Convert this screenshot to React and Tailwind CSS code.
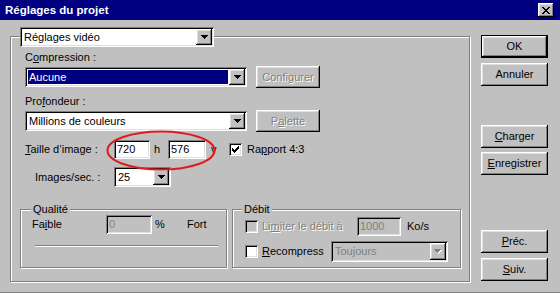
import React from 'react';

const RAISED = 'bg-[#c0c0c0] shadow-[inset_-1px_-1px_#000,inset_1px_1px_#fff,inset_-2px_-2px_#808080,inset_2px_2px_#dfdfdf]';
const SUNKEN = 'shadow-[inset_1px_1px_#808080,inset_-1px_-1px_#fff,inset_2px_2px_#000,inset_-2px_-2px_#dfdfdf]';
const ETCHED = 'border border-[#808080] shadow-[inset_1px_1px_#fff,1px_1px_#fff]';
const DISABLED_TXT = 'text-[#808080] [text-shadow:1px_1px_#fff]';

const ARROW = ['xxxxxxx', '.xxxxx.', '..xxx..', '...x...'];
const CLOSE = ['xx....xx', '.xx..xx.', '..xxxx..', '...xx...', '..xxxx..', '.xx..xx.', 'xx....xx'];
const CHECK = ['......x', '.....xx', 'x...xxx', 'xx.xxx.', 'xxxxx..', '.xxx...', '..x....'];

// petits glyphes pixel par pixel (flèches, croix, coche)
function Pixels({ rows, color = '#000', shade }) {
  const w = rows[0].length + (shade ? 1 : 0);
  const h = rows.length + (shade ? 1 : 0);
  const cells = [];
  rows.forEach((r, y) =>
    r.split('').forEach((c, x) => {
      if (c === 'x') cells.push([x, y]);
    })
  );
  return (
    <svg width={w} height={h} viewBox={`0 0 ${w} ${h}`} shapeRendering="crispEdges">
      {shade && cells.map(([x, y]) => <rect key={`s${x}-${y}`} x={x + 1} y={y + 1} width="1" height="1" fill={shade} />)}
      {cells.map(([x, y]) => <rect key={`${x}-${y}`} x={x} y={y} width="1" height="1" fill={color} />)}
    </svg>
  );
}

function Button({ children, isDefault, disabled, className = '' }) {
  return (
    <div
      className={`flex items-center justify-center ${RAISED} ${isDefault ? 'border border-black' : ''} ${
        disabled ? DISABLED_TXT : ''
      } ${className}`}
    >
      <span>{children}</span>
    </div>
  );
}

function Select({ value, selected, disabled, className = '' }) {
  return (
    <div className={`flex p-[2px] ${disabled ? 'bg-[#c0c0c0]' : 'bg-white'} ${SUNKEN} ${className}`}>
      <div className="flex-1 min-w-0 p-[1px] pr-[1px]">
        <div
          className={`h-full flex items-center pl-[1px] whitespace-nowrap ${selected ? 'bg-[#000080] text-white' : ''} ${
            disabled ? 'text-[#808080]' : ''
          }`}
        >
          {value}
        </div>
      </div>
      <div className={`w-[16px] h-full flex items-center justify-center ${RAISED}`}>
        {disabled ? <Pixels rows={ARROW} color="#808080" shade="#fff" /> : <Pixels rows={ARROW} />}
      </div>
    </div>
  );
}

function Input({ value, disabled, className = '' }) {
  return (
    <div
      className={`h-[19px] flex items-center pl-[3px] ${SUNKEN} ${disabled ? 'bg-[#c0c0c0] text-[#808080]' : 'bg-white'} ${className}`}
    >
      {value}
    </div>
  );
}

function Checkbox({ checked, disabled }) {
  return (
    <div className={`w-[13px] h-[13px] shrink-0 flex items-center justify-center ${SUNKEN} ${disabled ? 'bg-[#c0c0c0]' : 'bg-white'}`}>
      {checked && <Pixels rows={CHECK} />}
    </div>
  );
}

export default function App() {
  return (
    <div className="relative w-[560px] h-[293px] overflow-hidden bg-[#c0c0c0] text-black text-[11px] leading-[13px] flex flex-col font-['Liberation_Sans',Arial,sans-serif]">
      {/* barre de titre */}
      <div className="h-[20px] shrink-0 bg-[#000080] flex items-center pl-[5px] pr-[6px]">
        <span className="font-bold text-white text-[11.5px]">Réglages du projet</span>
        <div className={`ml-auto w-[16px] h-[14px] flex items-center justify-center ${RAISED}`}>
          <Pixels rows={CLOSE} />
        </div>
      </div>

      <div className="flex flex-1">
        {/* cadre principal */}
        <div className={`relative ml-[10px] mt-[16px] w-[460px] h-[246px] ${ETCHED}`}>
          <div className="absolute left-[9px] top-[-10px] w-[194px]">
            <Select value="Réglages vidéo" className="h-[20px]" />
          </div>

          <div className="ml-[14px] mt-[14px] h-[13px]">
            C<u>o</u>mpression :
          </div>
          <div className="ml-[14px] mt-[2px] h-[22px] flex items-center">
            <Select selected value="Aucune" className="w-[222px] h-[20px]" />
            <Button disabled className="ml-[9px] w-[64px] h-[22px]">
              Confi<u>g</u>urer
            </Button>
          </div>

          <div className="ml-[14px] mt-[7px] h-[13px]">
            Pro<u>f</u>ondeur :
          </div>
          <div className="ml-[14px] mt-[2px] h-[22px] flex items-center">
            <Select value="Millions de couleurs" className="w-[222px] h-[20px]" />
            <Button disabled className="ml-[9px] w-[64px] h-[22px]">
              P<u>a</u>lette
            </Button>
          </div>

          <div className="ml-[14px] mt-[8px] h-[19px] flex items-center">
            <span className="w-[89px]">
              <u>T</u>aille d’image :
            </span>
            <Input value="720" className="w-[36px]" />
            <span className="w-[18px] pl-[4px]">h</span>
            <Input value="576" className="w-[38px]" />
            <span className="w-[23px] pl-[5px]">v</span>
            <Checkbox checked />
            <span className="ml-[5px]">
              Ra<u>p</u>port 4:3
            </span>
          </div>

          <div className="ml-[24px] mt-[8px] h-[20px] flex items-center">
            <span className="w-[79px]">
              Ima<u>g</u>es/sec. :
            </span>
            <Select value="25" className="w-[57px] h-[20px]" />
          </div>

          <div className="ml-[9px] mt-[22px] flex">
            {/* Qualité */}
            <div className={`relative w-[207px] h-[59px] ${ETCHED}`}>
              <span className="absolute left-[10px] top-[-7px] px-[2px] bg-[#c0c0c0]">Qualité</span>
              <div className="mt-[5px] ml-[11px] h-[19px] flex items-center">
                <span className="w-[74px]">
                  Fa<u>i</u>ble
                </span>
                <Input disabled value="0" className="w-[46px]" />
                <span className="ml-[3px] w-[32px]">%</span>
                <span>Fort</span>
              </div>
              <div className="ml-[14px] mt-[11px] w-[183px] h-[2px] border-t border-t-[#808080] border-b border-b-white" />
            </div>

            {/* Débit */}
            <div className={`relative ml-[5px] w-[229px] h-[59px] ${ETCHED}`}>
              <span className="absolute left-[9px] top-[-7px] px-[2px] bg-[#c0c0c0]">Débit</span>
              <div className="mt-[7px] ml-[12px] h-[19px] flex items-center">
                <Checkbox disabled />
                <span className={`ml-[4px] w-[95px] ${DISABLED_TXT}`}>
                  Li<u>m</u>iter le débit à
                </span>
                <Input disabled value="1000" className="w-[44px]" />
                <span className="ml-[6px]">Ko/s</span>
              </div>
              <div className="mt-[5px] ml-[12px] h-[21px] flex items-center">
                <Checkbox />
                <span className="ml-[4px] w-[69px]">
                  <u>R</u>ecompress
                </span>
                <Select disabled value="Toujours" className="w-[117px] h-[21px]" />
              </div>
            </div>
          </div>
        </div>

        {/* boutons */}
        <div className="ml-[11px] mt-[15px] w-[67px] flex flex-col">
          <Button isDefault className="h-[23px]">OK</Button>
          <Button className="mt-[5px] h-[23px]">Annuler</Button>
          <Button className="mt-[39px] h-[23px]">
            <u>C</u>harger
          </Button>
          <Button className="mt-[4px] h-[23px]">
            <u>E</u>nregistrer
          </Button>
          <Button className="mt-[55px] h-[23px]">
            <u>P</u>réc.
          </Button>
          <Button className="mt-[5px] h-[23px]">
            <u>S</u>uiv.
          </Button>
        </div>
      </div>

      <div className="h-[1px] shrink-0 bg-[#808080]" />

      {/* annotation : ellipse rouge autour de la taille d'image */}
      <svg className="absolute left-[106px] top-[130px] pointer-events-none" width="110" height="41" viewBox="0 0 110 41">
        <ellipse cx="55" cy="20.5" rx="53.5" ry="19" fill="none" stroke="#dc1c1c" strokeWidth="2" />
      </svg>
    </div>
  );
}
